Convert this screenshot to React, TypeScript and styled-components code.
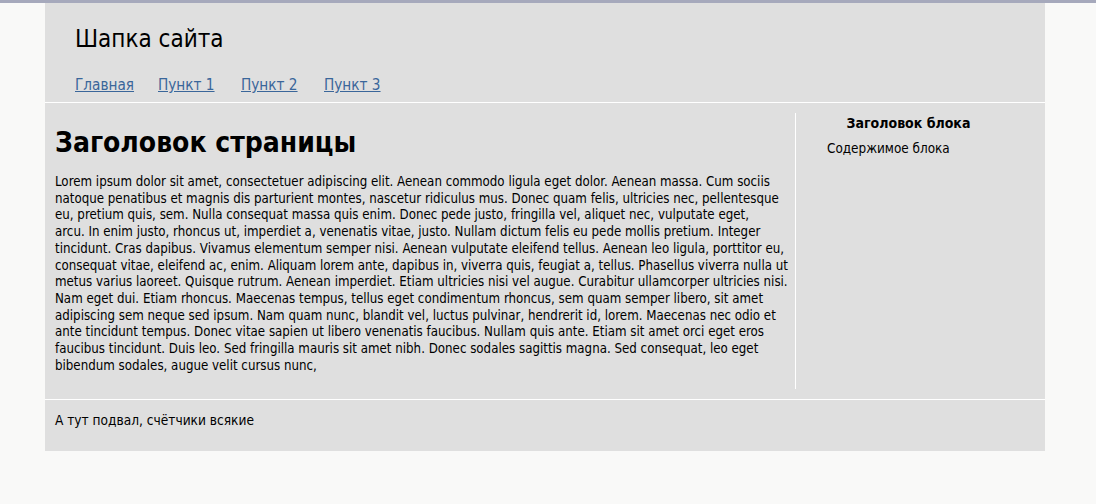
import styled, { createGlobalStyle } from "styled-components";

const GlobalStyle = createGlobalStyle`
  html, body {
    margin: 0;
    padding: 0;
  }
  body {
    background-color: #f9f9f8;
    border-top: 3px solid #a6a9bc;
    font-family: "DejaVu Sans Condensed", "DejaVu Sans", sans-serif;
    font-size: 13.2px;
    line-height: 16.7px;
    color: #000;
  }
`;

const Page = styled.div`
  width: 1000px;
  margin-left: 45px;
  background-color: #dfdfdf;
`;

const Header = styled.header`
  height: 100px;
  box-sizing: border-box;
  padding: 22px 30px 0;
  border-bottom: 1px solid #ffffff;
`;

const SiteTitle = styled.div`
  font-size: 24px;
  line-height: 28px;
  margin-bottom: 23px;
`;

const Nav = styled.nav`
  display: grid;
  grid-auto-flow: column;
  grid-auto-columns: 83px;
  justify-content: start;
  font-size: 15.2px;
  line-height: 18px;
`;

const NavLink = styled.a`
  color: #3a669a;
  text-decoration: underline;
  white-space: nowrap;
`;

const Main = styled.div`
  display: flex;
  padding: 10px 0 10px;
`;

const Content = styled.div`
  width: 750px;
  box-sizing: border-box;
  padding: 0 10px;
  h1 {
    font-size: 28px;
    line-height: 32px;
    font-weight: bold;
    margin: 14px 0 15px;
  }
`;

const Text = styled.p`
  margin: 0 0 15px;
  white-space: nowrap;
`;

const Sidebar = styled.aside`
  flex: 1;
  border-left: 1px solid #ffffff;
  padding: 0 55px 0 31px;
  h3 {
    font-size: 14px;
    line-height: 16px;
    font-weight: bold;
    text-align: center;
    margin: 2px 0 10px;
  }
  p {
    margin: 0;
    font-size: 13.4px;
  }
`;

const Footer = styled.footer`
  height: 52px;
  box-sizing: border-box;
  border-top: 1px solid #ffffff;
  padding: 12px 10px 0;
  font-size: 13.6px;
`;

const links = ["Главная", "Пункт 1", "Пункт 2", "Пункт 3"];

const loremLines = [
  "Lorem ipsum dolor sit amet, consectetuer adipiscing elit. Aenean commodo ligula eget dolor. Aenean massa. Cum sociis",
  "natoque penatibus et magnis dis parturient montes, nascetur ridiculus mus. Donec quam felis, ultricies nec, pellentesque",
  "eu, pretium quis, sem. Nulla consequat massa quis enim. Donec pede justo, fringilla vel, aliquet nec, vulputate eget,",
  "arcu. In enim justo, rhoncus ut, imperdiet a, venenatis vitae, justo. Nullam dictum felis eu pede mollis pretium. Integer",
  "tincidunt. Cras dapibus. Vivamus elementum semper nisi. Aenean vulputate eleifend tellus. Aenean leo ligula, porttitor eu,",
  "consequat vitae, eleifend ac, enim. Aliquam lorem ante, dapibus in, viverra quis, feugiat a, tellus. Phasellus viverra nulla ut",
  "metus varius laoreet. Quisque rutrum. Aenean imperdiet. Etiam ultricies nisi vel augue. Curabitur ullamcorper ultricies nisi.",
  "Nam eget dui. Etiam rhoncus. Maecenas tempus, tellus eget condimentum rhoncus, sem quam semper libero, sit amet",
  "adipiscing sem neque sed ipsum. Nam quam nunc, blandit vel, luctus pulvinar, hendrerit id, lorem. Maecenas nec odio et",
  "ante tincidunt tempus. Donec vitae sapien ut libero venenatis faucibus. Nullam quis ante. Etiam sit amet orci eget eros",
  "faucibus tincidunt. Duis leo. Sed fringilla mauris sit amet nibh. Donec sodales sagittis magna. Sed consequat, leo eget",
  "bibendum sodales, augue velit cursus nunc,",
];

export default function App() {
  return (
    <>
      <GlobalStyle />
      <Page>
        <Header>
          <SiteTitle>Шапка сайта</SiteTitle>
          <Nav>
            {links.map((l) => (
              <NavLink key={l} href="#">
                {l}
              </NavLink>
            ))}
          </Nav>
        </Header>
        <Main>
          <Content>
            <h1>Заголовок страницы</h1>
            <Text>
              {loremLines.map((line, i) => (
                <span key={i}>
                  {line}
                  {i < loremLines.length - 1 && <br />}
                </span>
              ))}
            </Text>
          </Content>
          <Sidebar>
            <h3>Заголовок блока</h3>
            <p>Содержимое блока</p>
          </Sidebar>
        </Main>
        <Footer>А тут подвал, счётчики всякие</Footer>
      </Page>
    </>
  );
}
